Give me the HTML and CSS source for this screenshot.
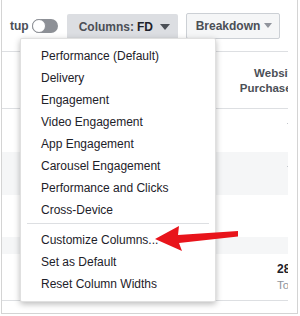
FILE: index.html
```html
<!DOCTYPE html>
<html lang="en">
<head>
  <meta charset="UTF-8" />
  <title>Columns menu</title>
  <link rel="stylesheet" href="styles.css">
</head>
<body>

  <div class="frame">

    <div class="toolbar">
      <span class="label">tup</span>
      <span class="toggle"><span class="knob"></span></span>
      <button class="btn btn-columns">Columns: <b>FD</b><span class="caret"></span></button>
      <button class="btn btn-breakdown">Breakdown<span class="caret small"></span></button>
    </div>

    <div class="table">
      <div class="table-inner">
        <div class="row head">
          <div class="cell-right">Website<br>Purchases</div>
        </div>
        <div class="row r1"><span class="tick"></span></div>
        <div class="row r2 shaded"><span class="tick"></span></div>
        <div class="row r3"></div>
        <div class="row r4 shaded"></div>
        <div class="row r5">
          <div class="total">
            <strong>28</strong>
            <span>Total</span>
          </div>
        </div>
      </div>
    </div>

    <ul class="menu">
      <li>Performance (Default)</li>
      <li>Delivery</li>
      <li>Engagement</li>
      <li>Video Engagement</li>
      <li>App Engagement</li>
      <li>Carousel Engagement</li>
      <li>Performance and Clicks</li>
      <li>Cross-Device</li>
      <li class="divider"></li>
      <li>Customize Columns...</li>
      <li>Set as Default</li>
      <li>Reset Column Widths</li>
    </ul>

  </div>

  <!-- annotation arrow -->
  <svg class="arrow" width="300" height="316" viewBox="0 0 300 316">
    <polygon points="155,239 179,226 178,235 238,231 238,236.5 179,243 182,251" fill="#e8141b" />
  </svg>

</body>
</html>
```

FILE: styles.css
```css
* { margin:0; padding:0; box-sizing:border-box; }
body { width:300px; height:316px; background:#fff; font-family:"Liberation Sans", Arial, sans-serif; position:relative; overflow:hidden; }
.frame { position:relative; margin:-1px 0 0 1px; width:297px; height:315px; border:1px solid #d4d4d4; background:#fff; }

.toolbar { display:flex; align-items:center; height:51px; padding-left:8px; }
.label { font-size:12px; font-weight:700; color:#4b4f56; margin-right:3px; }
.toggle { position:relative; width:26px; height:14px; border-radius:7px; background:#8d9096; }
.knob { position:absolute; left:0; top:0; width:14px; height:14px; border-radius:50%; background:#fff; border:1px solid #8d9096; }

.btn { display:flex; align-items:center; font-family:inherit; font-size:12px; font-weight:700; color:#4b4f56; border-radius:2px; cursor:pointer; }
.btn b { color:#1d2129; margin-left:3px; }
.btn-columns { margin-left:9px; width:111px; height:25px; padding-left:12px; border:none; background:#dcdee2; border-radius:2px 2px 0 0; margin-top:2px; }
.btn-breakdown { margin-left:8px; width:94px; height:26px; padding-left:9px; background:#f5f6f7; border:1px solid #ccd0d5; }
.caret { display:inline-block; margin-left:7px; border-left:5px solid transparent; border-right:5px solid transparent; border-top:6px solid #4b4f56; }
.caret.small { margin-left:4px; border-left-width:4px; border-right-width:4px; border-top-width:5px; border-top-color:#90949c; }

.table { width:286px; overflow:hidden; }
.table-inner { width:296px; }
.row { position:relative; border-bottom:1px solid #e9eaed; }
.head { border-top:1px solid #dddfe2; height:58px; display:flex; align-items:center; justify-content:flex-end; border-bottom-color:#dddfe2; }
.cell-right { text-align:right; font-size:11.5px; font-weight:700; line-height:15px; color:#4b4f56; margin-top:1px; white-space:nowrap; }
.r1 { height:43px; border:none; }
.r2 { height:43px; border:none; }
.r3 { height:42px; border:none; }
.r4 { height:17px; border:none; }
.r5 { height:47px; border-bottom:1px solid #dddfe2; }
.shaded { background:#f5f6f7; }
.tick { position:absolute; left:285px; top:14px; width:2px; height:1px; background:#c4c8cd; }
.total { position:absolute; left:275px; top:7px; display:flex; flex-direction:column; line-height:16px; white-space:nowrap; }
.total strong { font-size:12px; color:#1d2129; }
.total span { font-size:11.5px; color:#90949c; }

.menu { position:absolute; left:18px; top:38px; width:196px; list-style:none; background:#fff; border:1px solid rgba(0,0,0,0.12); border-radius:2px; box-shadow:0 2px 6px rgba(0,0,0,0.28); padding:6px 0; }
.menu li { height:22px; line-height:22px; padding-left:20px; font-size:12px; color:#1d2129; white-space:nowrap; }
.menu li.divider { height:1px; background:#dddfe2; margin:2px 6px 5px; }

.arrow { position:absolute; left:0; top:0; }
```
